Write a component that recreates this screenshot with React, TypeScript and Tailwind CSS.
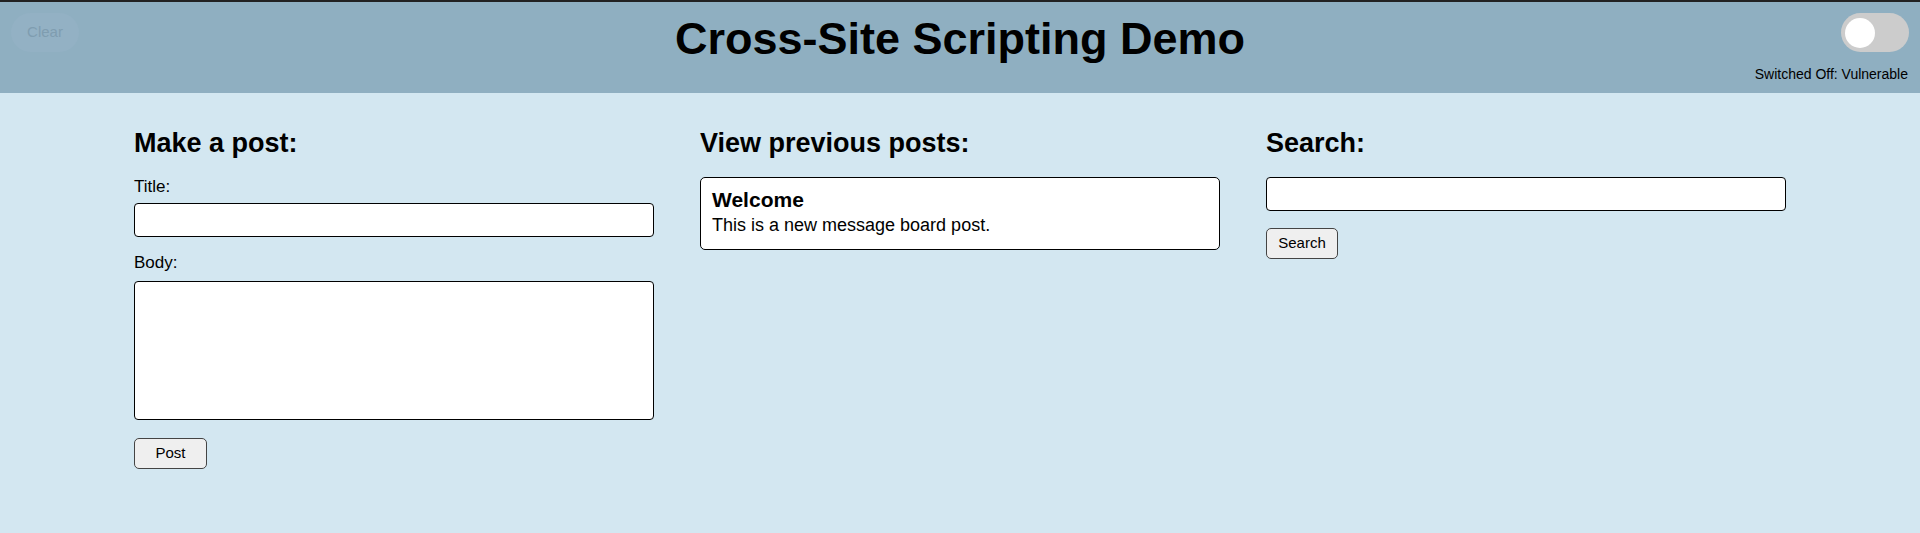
import React from "react";

export default function App() {
  return (
    <div className="min-h-screen bg-[#d3e7f1] text-black font-['Liberation_Sans',Arial,sans-serif]">
      <header className="h-[93px] border-t-2 border-[#222222] bg-[#8fafc1] grid grid-cols-[1fr_auto_1fr]">
        <div className="pl-[11px] pt-[11px]">
          <button className="w-[68px] h-[39px] rounded-full bg-[#93b1c4] text-[15px] text-[#7f9db0]">
            Clear
          </button>
        </div>
        <h1 className="pt-[11px] text-[45px] font-bold leading-[52px] text-center">
          Cross-Site Scripting Demo
        </h1>
        <div className="flex flex-col items-end pt-[11px] pr-[11px]">
          <div className="w-[68px] h-[39px] rounded-full bg-[#cccccc] flex items-center pl-[4px]">
            <div className="w-[30px] h-[30px] rounded-full bg-white" />
          </div>
          <div className="mt-[14px] mr-[1px] text-[14px] leading-[16px]">
            Switched Off: Vulnerable
          </div>
        </div>
      </header>

      <main className="grid grid-cols-3 gap-x-[46px] px-[134px] pt-[35px]">
        <section className="flex flex-col items-start">
          <h2 className="text-[27px] font-bold leading-[31px]">Make a post:</h2>
          <label className="mt-[18px] text-[17px] leading-[20px]">Title:</label>
          <input
            type="text"
            className="mt-[6px] w-full h-[34px] bg-white border border-black rounded-[4px] px-2"
          />
          <label className="mt-[16px] text-[17px] leading-[20px]">Body:</label>
          <textarea className="mt-[8px] w-full h-[139px] bg-white border border-black rounded-[4px] p-2 resize-none" />
          <button className="mt-[18px] w-[73px] h-[31px] bg-[#efefef] border border-[#444444] rounded-[5px] text-[15px]">
            Post
          </button>
        </section>

        <section className="flex flex-col">
          <h2 className="text-[27px] font-bold leading-[31px]">View previous posts:</h2>
          <div className="mt-[18px] bg-white border border-black rounded-[5px] px-[11px] pt-[10px] pb-[13px]">
            <h3 className="text-[21px] font-bold leading-[24px]">Welcome</h3>
            <p className="mt-[3px] text-[18px] leading-[21px]">This is a new message board post.</p>
          </div>
        </section>

        <section className="flex flex-col items-start">
          <h2 className="text-[27px] font-bold leading-[31px]">Search:</h2>
          <input
            type="text"
            className="mt-[18px] w-full h-[34px] bg-white border border-black rounded-[4px] px-2"
          />
          <button className="mt-[17px] w-[72px] h-[31px] bg-[#efefef] border border-[#444444] rounded-[5px] text-[15px]">
            Search
          </button>
        </section>
      </main>
    </div>
  );
}
